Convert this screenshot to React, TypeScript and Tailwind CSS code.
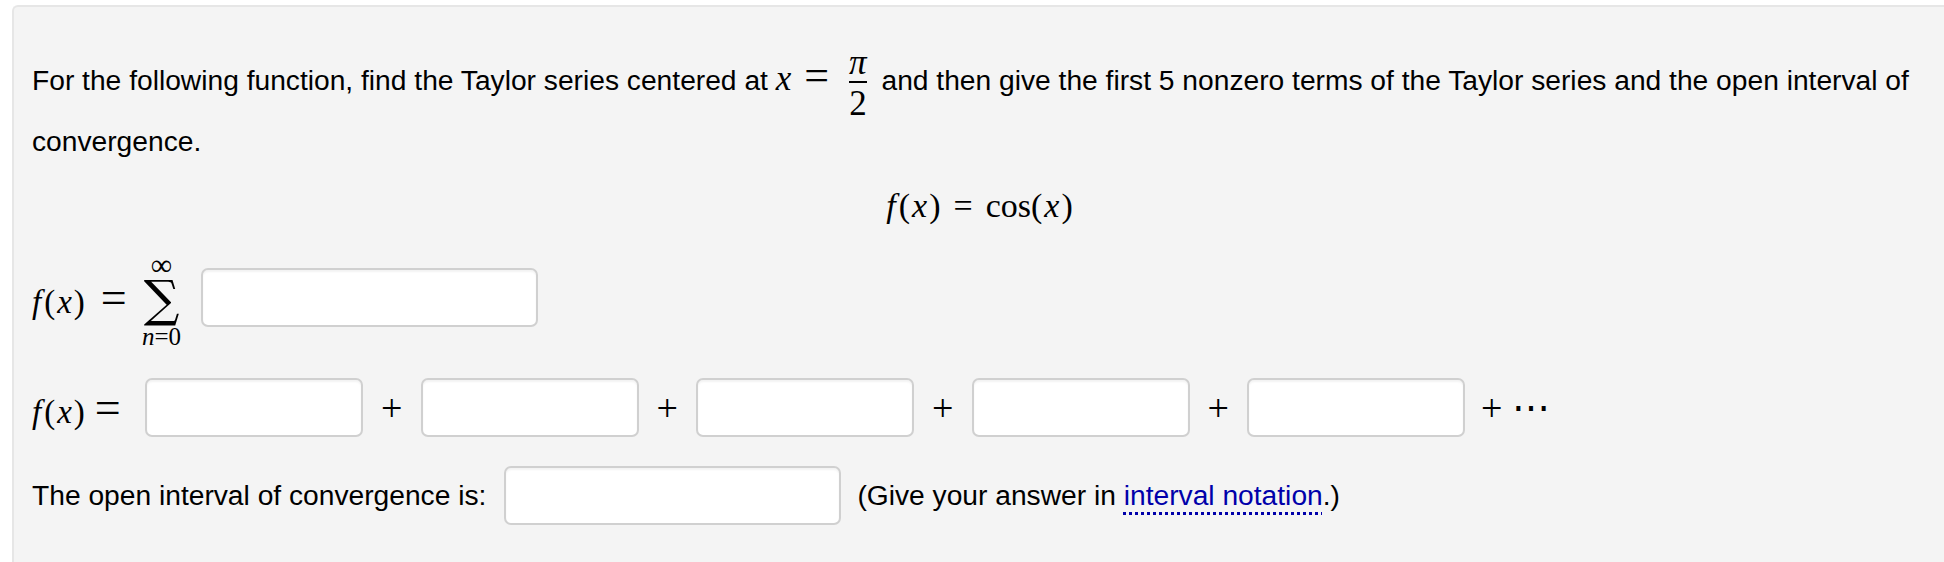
import React from "react";

const mathFont = "font-['Liberation_Serif','Times_New_Roman',serif]";

function Frac({ num, den }: { num: React.ReactNode; den: React.ReactNode }) {
  return (
    <span className="inline-flex flex-col items-center align-middle -my-[6px] px-[7px]">
      <span className="block h-[30px] leading-[24px]">{num}</span>
      <span className="block h-[2px] w-full bg-black" />
      <span className="block h-[30px] leading-[42px]">{den}</span>
    </span>
  );
}

function AnswerBox({ width }: { width: string }) {
  return (
    <input
      type="text"
      className={`${width} h-[59px] shrink-0 bg-white border-2 border-[#d0d0d0] rounded-[7px] shadow-[inset_0_2px_2px_rgba(0,0,0,0.05)] outline-none`}
    />
  );
}

function Plus() {
  return (
    <span className="w-[57.5px] shrink-0 text-center font-['Liberation_Serif',serif] text-[38px] leading-none">
      +
    </span>
  );
}

// f(x) with a little extra room, like the TeX glyphs
function FofX() {
  return (
    <>
      <i className="mr-[3px]">f</i>(<i className="px-[2px]">x</i>)
    </>
  );
}

function FofXEquals({ width, eqGap }: { width: string; eqGap: string }) {
  return (
    <span className="flex shrink-0 items-center font-['Liberation_Serif',serif]">
      <span className={`${width} whitespace-nowrap text-[33px] leading-none`}>
        <FofX />
        <span className={`${eqGap} inline-block font-['Liberation_Serif',serif] text-[46px] leading-none`}>=</span>
      </span>
    </span>
  );
}

export default function App() {
  return (
    <div className="min-h-[562px] bg-white pt-[5px] pl-[12px] font-['Liberation_Sans',Arial,sans-serif] text-[28.2px] text-black">
      <div className="min-h-[557px] bg-[#f4f4f4] border-l-2 border-t-2 border-[#e6e6e6] rounded-tl-[6px] pl-[18px] pr-[17px] pt-[41px]">
        {/* Question text */}
        <p className="leading-[61px] whitespace-nowrap">
          For the following function, find the Taylor series centered at{" "}
          <span className={`${mathFont} text-[35px]`}>
            <i>x</i>
            <span className="mx-[13px] text-[44px] leading-none">=</span>
            <Frac num={<i>π</i>} den="2" />
          </span>{" "}
          and then give the first 5 nonzero terms of the Taylor series and the open interval of
          <br />
          convergence.
        </p>

        <div className="mt-[14px] text-center leading-[40px]">
          <span className={`${mathFont} text-[34px]`}>
            <FofX />
            <span className="mx-[13px]">=</span>cos(<i className="px-[2px]">x</i>)
          </span>
        </div>

        {/* Series row */}
        <div className="mt-[41px] flex h-[59px] items-center">
          <FofXEquals width="w-[108px]" eqGap="ml-[16px]" />
          <span className="flex w-[43px] shrink-0 flex-col items-center pt-[8px]">
            <span className="font-['Liberation_Serif',serif] text-[30px] leading-[23px]">∞</span>
            <span className="font-['DejaVu_Serif',serif] text-[50px] leading-[46px]">∑</span>
            <span className="whitespace-nowrap font-['Liberation_Serif',serif] text-[25px] leading-[29px]">
              <i>n</i>=0
            </span>
          </span>
          <span className="ml-[18px] flex">
            <AnswerBox width="w-[337px]" />
          </span>
        </div>

        {/* First five terms */}
        <div className="mt-[51px] flex h-[59px] items-center">
          <FofXEquals width="w-[113px]" eqGap="ml-[10px]" />
          <AnswerBox width="w-[218px]" />
          <Plus />
          <AnswerBox width="w-[218px]" />
          <Plus />
          <AnswerBox width="w-[218px]" />
          <Plus />
          <AnswerBox width="w-[218px]" />
          <Plus />
          <AnswerBox width="w-[218px]" />
          <span className="ml-[16px] flex items-center font-['Liberation_Serif',serif] text-[38px] leading-none">
            +<span className="ml-[10px] tracking-[1px]">⋯</span>
          </span>
        </div>

        {/* Interval */}
        <div className="mt-[29px] flex h-[59px] items-center whitespace-nowrap">
          <span>The open interval of convergence is:</span>
          <span className="ml-[18px] flex">
            <AnswerBox width="w-[337px]" />
          </span>
          <span className="ml-[16px]">
            (Give your answer in{" "}
            <a href="#" className="text-[#0000aa] underline decoration-dotted decoration-[3px] underline-offset-[7px]">
              interval notation
            </a>
            .)
          </span>
        </div>
      </div>
    </div>
  );
}
